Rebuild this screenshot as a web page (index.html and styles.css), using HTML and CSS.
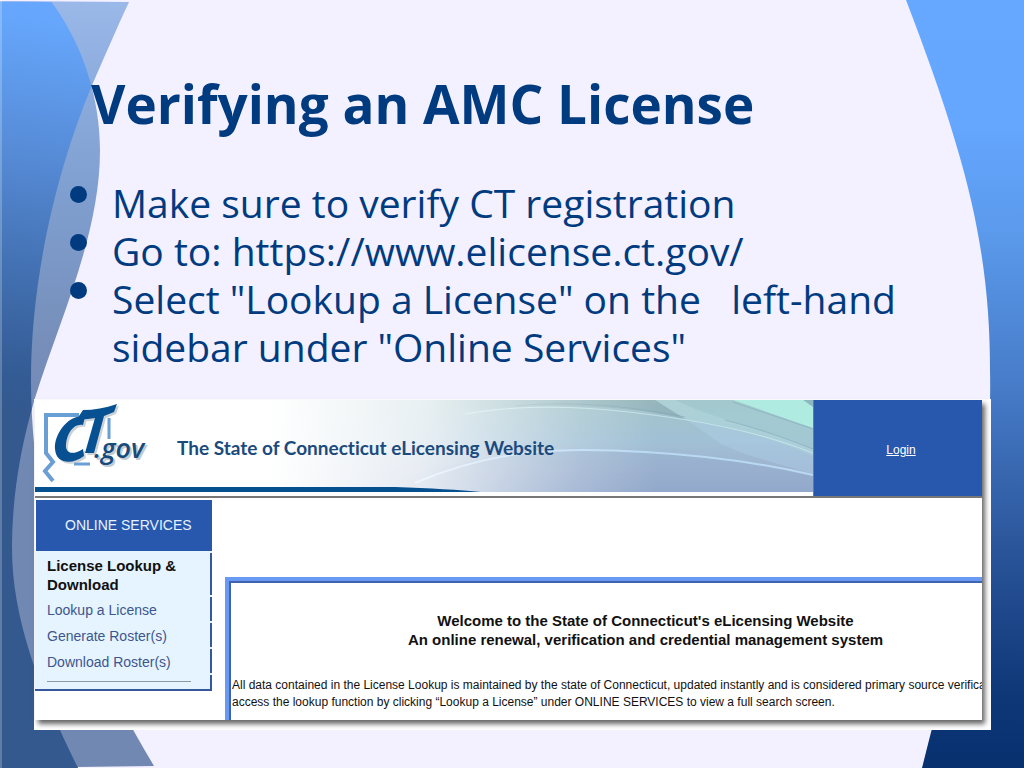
FILE: index.html
```html
<!DOCTYPE html>
<html lang="en">
<head>
<meta charset="utf-8">
<title>Verifying an AMC License</title>
<link rel="stylesheet" href="styles.css">
</head>
<body>
<main class="slide">
  <svg class="backdrop" viewBox="0 0 1024 768" preserveAspectRatio="none" aria-hidden="true">
    <defs>
      <linearGradient id="mid" x1="0" y1="0" x2="0" y2="1">
        <stop offset="0" stop-color="#9ab8e8"/><stop offset=".1" stop-color="#8eaddf"/><stop offset=".25" stop-color="#7f9fd0"/><stop offset=".45" stop-color="#768eb9"/><stop offset=".6" stop-color="#7088b2"/><stop offset="1" stop-color="#7088b2"/>
      </linearGradient>
      <linearGradient id="deep" gradientUnits="userSpaceOnUse" x1="0" y1="10" x2="-60" y2="400">
        <stop offset="0" stop-color="#66a7fd"/><stop offset=".35" stop-color="#568bd6"/><stop offset=".65" stop-color="#4270b1"/><stop offset=".9" stop-color="#345c95"/><stop offset="1" stop-color="#33598f"/>
      </linearGradient>
      <linearGradient id="right" gradientUnits="userSpaceOnUse" x1="0" y1="0" x2="0" y2="768">
        <stop offset="0" stop-color="#66a8ff"/><stop offset=".16" stop-color="#65a6ff"/><stop offset=".3" stop-color="#5b9aec"/><stop offset=".5" stop-color="#477cc9"/><stop offset=".72" stop-color="#2a5499"/><stop offset=".9" stop-color="#0f3879"/><stop offset="1" stop-color="#07306f"/>
      </linearGradient>
      <clipPath id="wave"><path d="M0 0H50C84 45 100 100 100 150C100 235 60 318 35 398C18 455 12 505 12 548C12 620 40 690 78 768H0Z"/></clipPath>
    </defs>
    <path fill="url(#mid)" d="M0 1L129 2C115 32 104 58 93 83C58 166 31 275 31 380C31 540 86 650 154 766L0 768Z"/>
    <path fill="url(#mid)" d="M0 1L50 2C84 45 100 100 100 150C100 235 60 318 35 398C18 455 12 505 12 548C12 620 40 690 78 768H0Z"/>
    <path fill="url(#deep)" clip-path="url(#wave)" d="M0 2H129C115 32 104 58 93 83C58 166 31 275 31 380C31 540 86 650 154 768H0Z"/>
    <path fill="#fff" opacity=".22" d="M0 0H2V768H0Z"/>
    <path fill="url(#right)" d="M906 0C925 50 942 96 956 144C982 230 990 300 990 370C993 500 962 610 922 768H1024V0Z"/>
  </svg>

  <h1 class="title">Verifying an AMC License</h1>
  <ul class="points">
    <li>Make sure to verify CT registration</li>
    <li>Go to: https://www.elicense.ct.gov/</li>
    <li>Select "Lookup a License" on the &nbsp; left-hand<br>sidebar under "Online Services"</li>
  </ul>

  <div class="shot">
    <div class="site">
      <header class="masthead">
        <div class="banner">
          <svg class="art" viewBox="0 0 778 92" preserveAspectRatio="none" aria-hidden="true">
            <defs>
              <linearGradient id="sky" x1="0" y1="0" x2="0" y2="1"><stop offset="0" stop-color="#a4c4ca"/><stop offset=".45" stop-color="#a0c0d5"/><stop offset=".75" stop-color="#9fb3cf"/><stop offset="1" stop-color="#93a9cc"/></linearGradient>
              <linearGradient id="fade" x1="0" y1="0" x2="1" y2="0"><stop offset=".3" stop-color="#fff"/><stop offset=".5" stop-color="#fff" stop-opacity=".75"/><stop offset=".7" stop-color="#fff" stop-opacity=".2"/><stop offset=".8" stop-color="#fff" stop-opacity="0"/></linearGradient>
              <linearGradient id="shade" x1="0" y1="0" x2="1" y2="0"><stop offset="0" stop-color="#789ba0" stop-opacity="0"/><stop offset="1" stop-color="#789ba0" stop-opacity=".4"/></linearGradient>
            </defs>
            <path fill="url(#sky)" d="M0 0H778V92H0Z"/>
            <path fill="url(#shade)" d="M400 0H620L650 19C580 2 500 4 400 12Z"/>
            <path fill="#b5dedf" opacity=".5" d="M620 0H698L778 28V56C735 37 690 26 652 20Z"/>
            <path fill="#88b5bf" opacity=".25" d="M640 0H698L778 28V49C730 28 680 20 640 0Z"/>
            <path fill="#b0ebe2" d="M698 0H778V28Z"/>
            <path fill="#8db8c0" d="M768 0H778V7Z"/>
            <path fill="#b3d3ed" opacity=".35" d="M652 20C690 26 735 37 778 56V74C740 63 715 57 686 44Z"/>
            <path fill="#8fa8cb" opacity=".35" d="M330 92C430 52 520 48 610 52C680 56 735 65 778 75V92Z"/>
            <path fill="none" stroke="#b9d9f3" stroke-width="2" d="M380 83C460 48 530 47 610 52C680 56 735 65 778 75"/>
            <path fill="none" stroke="#c8e8ee" opacity=".8" d="M430 14C500 2 570 7 652 20C700 28 740 38 778 53"/>
            <path fill="none" stroke="#7ba4af" opacity=".5" d="M480 6C540 0 600 7 650 17M698 2L778 29M690 20C725 29 750 38 778 49"/>
            <path fill="url(#fade)" d="M0 0H778V92H0Z"/>
            <path fill="#05508f" d="M0 87H360C395 88 425 90 446 92H0Z"/>
          </svg>
          <svg class="logo" viewBox="0 0 116 84" role="img" aria-label="CT.gov">
            <path fill="none" stroke="#6a9fd6" stroke-width="4" d="M38 13H5V51L12 60L4 69L12 79"/>
            <path fill="none" stroke="#6a9fd6" stroke-width="3" d="M68 16V37M33 62H49"/>
            <g fill="#a9b4bd" opacity=".6" transform="translate(2 2)">
              <path d="M44 15C29 11 13 31 14 47C15 62 31 63 43 54L42 47C31 54 24 51 25 42C26 31 33 21 42 23Z"/>
              <path d="M36 17L42 8C53 8 64 6 76 2L73 10L63 14L53 51H44L54 16C47 17 41 18 36 17Z"/>
            </g>
            <g fill="#075193">
              <path d="M44 15C29 11 13 31 14 47C15 62 31 63 43 54L42 47C31 54 24 51 25 42C26 31 33 21 42 23Z"/>
              <path d="M36 17L42 8C53 8 64 6 76 2L73 10L63 14L53 51H44L54 16C47 17 41 18 36 17Z"/>
            </g>
            <text class="logo-shadow" x="55" y="58">.gov</text>
            <text class="logo-text" x="53" y="56">.gov</text>
          </svg>
          <span class="banner-title">The State of Connecticut eLicensing Website</span>
        </div>
        <div class="login"><a href="#login">Login</a></div>
      </header>
      <div class="columns">
        <nav class="sidebar">
          <h2>ONLINE SERVICES</h2>
          <ul>
            <li class="group">License Lookup &amp;<br>Download</li>
            <li><a href="#lookup">Lookup a License</a></li>
            <li><a href="#generate">Generate Roster(s)</a></li>
            <li><a href="#download">Download Roster(s)</a></li>
            <li class="rule"></li>
          </ul>
        </nav>
        <section class="panel">
          <h3>Welcome to the State of Connecticut's eLicensing Website<br>An online renewal, verification and credential management system</h3>
          <p>All data contained in the License Lookup is maintained by the state of Connecticut, updated instantly and is considered primary source verifica<br>access the lookup function by clicking “Lookup a License” under ONLINE SERVICES to view a full search screen.</p>
        </section>
      </div>
    </div>
  </div>
</main>
</body>
</html>
```
FILE: styles.css
```css
* { box-sizing: border-box; }
body { margin: 0; font-family: "Liberation Sans", Arial, sans-serif; }
.slide {
  position: relative;
  display: flex;
  flex-direction: column;
  min-height: 100vh;
  padding: 64px 33px 38px 34px;
  overflow: hidden;
  background: #f3f0ff;
  color: #003b80;
}
.backdrop { position: absolute; inset: 0; width: 100%; height: 100%; }
.title, .points, .shot { position: relative; margin: 0; }
.title {
  padding-left: 57px;
  font: bold 53px/80px "Open Sans", "Noto Sans", sans-serif;
}
.points {
  flex: 1;
  margin-top: 35px;
  padding: 0 0 28px 78px;
  list-style: none;
  font: 39px/48px "Open Sans", "Noto Sans", sans-serif;
}
.points li { position: relative; }
.points li::before {
  content: "";
  position: absolute;
  left: -42px;
  top: 7px;
  width: 17px;
  height: 17px;
  border-radius: 50%;
  background: #003b80;
}
.shot {
  padding: 1px 9px 10px 1px;
  background: #fff;
}
.site {
  overflow: hidden;
  background: #fff;
  box-shadow: 3px 4px 5px #666;
}
.masthead {
  display: flex;
  height: 98px;
  border-bottom: 2px solid #777;
}
.banner {
  position: relative;
  flex: 1;
  display: flex;
  align-items: center;
  padding-left: 6px;
  border-right: 1px solid #777;
}
.art { position: absolute; top: 0; left: 0; width: 100%; height: 92px; }
.logo { position: relative; width: 116px; height: 84px; margin-bottom: 8px; }
.logo text { font: italic 600 27px "Open Sans", sans-serif; }
.logo-text { fill: #174b7c; }
.logo-shadow { fill: #c3cbd2; }
.banner-title {
  position: relative;
  margin-left: 20px;
  white-space: nowrap;
  font: bold 19px/24px Lato, sans-serif;
  font-variant-ligatures: none;
  color: #1b4a7d;
}
.login {
  flex: 0 0 168px;
  display: flex;
  align-items: center;
  justify-content: center;
  padding: 4px 0 0 6px;
  background: #2858ae;
  font-size: 12px;
}
.login a { color: #fff; }
.columns { display: flex; gap: 13px; height: 222px; }
.sidebar { flex: 0 0 177px; padding-top: 2px; }
.sidebar h2 {
  margin: 0 0 0 1px;
  padding-left: 29px;
  background: #2858ae;
  color: #e6f2ff;
  font-size: 14px;
  font-weight: normal;
  line-height: 51px;
  white-space: nowrap;
}
.sidebar ul {
  display: flow-root;
  margin: 0;
  padding: 0;
  list-style: none;
  background: #e6f4ff;
  border-bottom: 2px solid #34579e;
  font-size: 14px;
}
.sidebar li {
  height: 24px;
  margin-bottom: 2px;
  padding-left: 12px;
  border-right: 2px solid #34579e;
  line-height: 26px;
}
.sidebar .group {
  height: 42px;
  padding-top: 3px;
  margin-top: 2px;
  font-size: 15px;
  font-weight: bold;
  line-height: 19px;
  color: #111;
}
.sidebar .rule { height: 14px; margin-bottom: 0; padding-right: 19px; }
.rule::before { content: ""; display: block; border-bottom: 1px solid #8a9aa8; padding-top: 6px; }
.sidebar a { color: #3d568e; text-decoration: none; }
.panel {
  flex: 1;
  min-width: 0;
  margin-top: 79px;
  border: solid #6799f5;
  border-width: 4px 0 0 4px;
  box-shadow: inset 2px 2px #4063ad;
  overflow: hidden;
  white-space: nowrap;
  color: #111;
}
.panel h3 {
  margin: 0;
  padding: 30px 0 0 80px;
  text-align: center;
  font-size: 15px;
  line-height: 19px;
}
.panel p {
  margin: 28px 0 0;
  padding-left: 3px;
  font-size: 12px;
  line-height: 17px;
}
```
